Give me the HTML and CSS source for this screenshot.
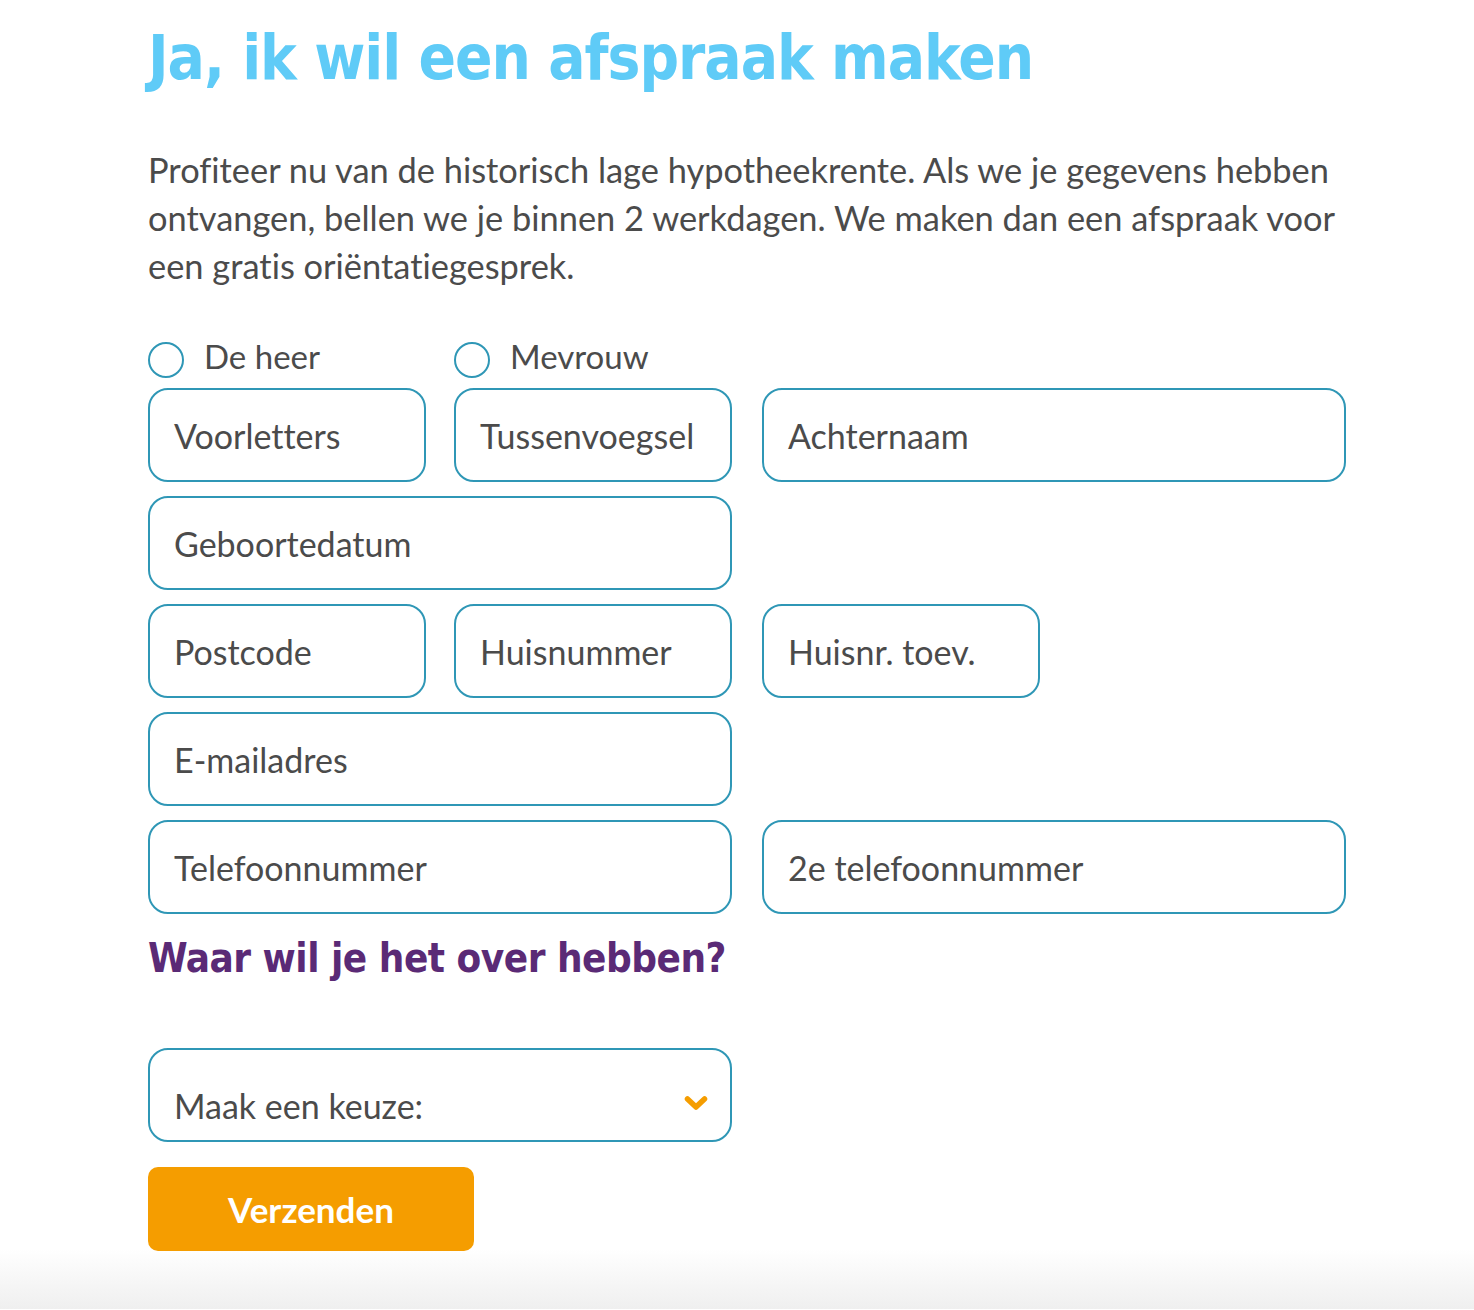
FILE: index.html
```html
<!DOCTYPE html>
<html lang="nl">
<head>
<meta charset="utf-8">
<title>Afspraak maken</title>
<link rel="stylesheet" href="styles.css">
</head>
<body>
<main class="page">
  <h1 class="title">Ja, ik wil een afspraak maken</h1>
  <p class="intro">Profiteer nu van de historisch lage hypotheekrente. Als we je gegevens hebben ontvangen, bellen we je binnen 2 werkdagen. We maken dan een afspraak voor een gratis oriëntatiegesprek.</p>
  <form class="form">
    <div class="radios">
      <label class="radio"><span class="circle"></span><span>De heer</span></label>
      <label class="radio"><span class="circle"></span><span>Mevrouw</span></label>
    </div>
    <div class="row">
      <div class="half split">
        <div class="field">Voorletters</div>
        <div class="field">Tussenvoegsel</div>
      </div>
      <div class="half"><div class="field">Achternaam</div></div>
    </div>
    <div class="row">
      <div class="half"><div class="field">Geboortedatum</div></div>
    </div>
    <div class="row">
      <div class="half split">
        <div class="field">Postcode</div>
        <div class="field">Huisnummer</div>
      </div>
      <div class="half split">
        <div class="field">Huisnr. toev.</div>
      </div>
    </div>
    <div class="row">
      <div class="half"><div class="field">E-mailadres</div></div>
    </div>
    <div class="row">
      <div class="half"><div class="field">Telefoonnummer</div></div>
      <div class="half"><div class="field">2e telefoonnummer</div></div>
    </div>
    <h2 class="subtitle">Waar wil je het over hebben?</h2>
    <div class="row">
      <div class="half">
        <div class="field select"><span>Maak een keuze:</span>
          <svg class="chev" width="24" height="16" viewBox="0 0 24 16"><path d="M3.5 4 L12 12 L20.5 4" fill="none" stroke="#f59d00" stroke-width="5.5" stroke-linecap="round" stroke-linejoin="round"/></svg>
        </div>
      </div>
    </div>
    <button type="button" class="submit">Verzenden</button>
  </form>
</main>
<div class="fade"></div>
</body>
</html>
```
FILE: styles.css
```css
html, body {
  margin: 0;
  padding: 0;
  background: #fff;
}
body {
  font-family: "Lato", "Open Sans", sans-serif;
  font-variant-ligatures: none;
  color: #4b4b4b;
}
.page {
  width: 1198px;
  padding: 0 0 0 148px;
}
.title {
  margin: 0;
  padding-top: 20px;
  font-family: "DejaVu Sans Condensed", "DejaVu Sans", sans-serif;
  font-weight: bold;
  font-size: 61.5px;
  line-height: 76px;
  letter-spacing: -1px;
  color: #5fcbf7;
}
.intro {
  margin: 50px 0 0;
  font-size: 34.4px;
  line-height: 48px;
  width: 1210px;
}
.form {
  margin-top: 44px;
}
.radios {
  display: flex;
  height: 54px;
  align-items: flex-start;
  box-sizing: border-box;
}
.radio {
  display: flex;
  align-items: center;
  width: 306px;
  font-size: 33px;
  line-height: 44px;
}
.circle {
  width: 32px;
  height: 32px;
  border: 2px solid #2f97b6;
  border-radius: 50%;
  margin-right: 20px;
  margin-top: 8px;
}
.row {
  display: flex;
  gap: 30px;
  margin-top: 14px;
}
.radios + .row {
  margin-top: 0;
}
.half {
  width: 584px;
  display: flex;
  gap: 28px;
}
.half > .field {
  flex: 1;
}
.split > .field {
  flex: 0 0 278px;
}
.field {
  box-sizing: border-box;
  height: 94px;
  border: 2px solid #2f97b6;
  border-radius: 20px;
  padding: 0 0 0 24px;
  display: flex;
  align-items: center;
  font-size: 34px;
  color: #4b4b4b;
}
.select {
  justify-content: space-between;
  padding-right: 22px;
}
.select span {
  padding-top: 20px;
}
.chev {
  margin-top: 16px;
}
.subtitle {
  margin: 12px 0 58px;
  font-family: "DejaVu Sans Condensed", "DejaVu Sans", sans-serif;
  font-weight: bold;
  font-size: 40px;
  line-height: 64px;
  color: #5a2a76;
  letter-spacing: -0.5px;
}
.subtitle + .row {
  margin-top: 0;
}
.submit {
  margin-top: 25px;
  width: 326px;
  height: 84px;
  border: 0;
  border-radius: 10px;
  background: #f59d00;
  color: #fff;
  font-family: "Lato", "Open Sans", sans-serif;
  font-weight: bold;
  font-size: 35px;
  cursor: pointer;
}
.fade {
  height: 60px;
  margin-top: -2px;
  background: linear-gradient(#ffffff, #efefef);
}
```
